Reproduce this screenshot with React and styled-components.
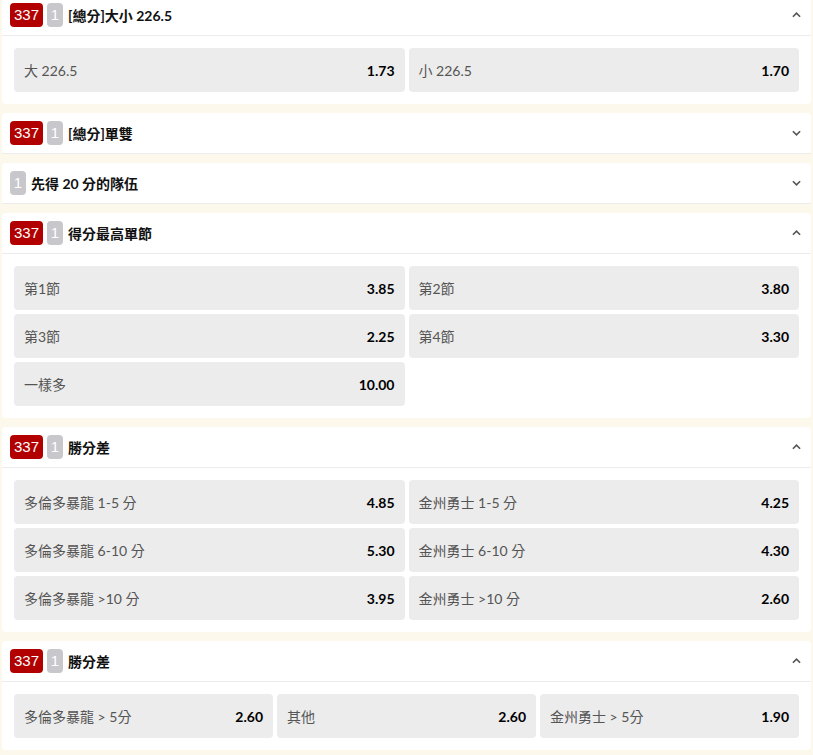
import React, { useState } from 'react';
import styled, { createGlobalStyle } from 'styled-components';

const GlobalStyle = createGlobalStyle`
  html, body {
    margin: 0;
    padding: 0;
    background: #fcf8ec;
  }
  body {
    font-family: Lato, "Noto Sans CJK TC", sans-serif;
    overflow: hidden;
  }
`;

const markets = [
  {
    id: 'ou',
    code: '337',
    title: '[總分]大小 226.5',
    open: true,
    cols: 2,
    options: [
      { label: '大 226.5', odds: '1.73' },
      { label: '小 226.5', odds: '1.70' },
    ],
  },
  { id: 'oe', code: '337', title: '[總分]單雙', open: false },
  { id: 'first20', title: '先得 20 分的隊伍', open: false },
  {
    id: 'quarter',
    code: '337',
    title: '得分最高單節',
    open: true,
    cols: 2,
    options: [
      { label: '第1節', odds: '3.85' },
      { label: '第2節', odds: '3.80' },
      { label: '第3節', odds: '2.25' },
      { label: '第4節', odds: '3.30' },
      { label: '一樣多', odds: '10.00' },
    ],
  },
  {
    id: 'margin',
    code: '337',
    title: '勝分差',
    open: true,
    cols: 2,
    options: [
      { label: '多倫多暴龍 1-5 分', odds: '4.85' },
      { label: '金州勇士 1-5 分', odds: '4.25' },
      { label: '多倫多暴龍 6-10 分', odds: '5.30' },
      { label: '金州勇士 6-10 分', odds: '4.30' },
      { label: '多倫多暴龍 >10 分', odds: '3.95' },
      { label: '金州勇士 >10 分', odds: '2.60' },
    ],
  },
  {
    id: 'margin5',
    code: '337',
    title: '勝分差',
    open: true,
    cols: 3,
    options: [
      { label: '多倫多暴龍 > 5分', odds: '2.60' },
      { label: '其他', odds: '2.60' },
      { label: '金州勇士 > 5分', odds: '1.90' },
    ],
  },
];

const Chevron = ({ up }) => (
  <ChevronIcon viewBox="0 0 10 6" $up={up}>
    <path d="M1 1 L5 5 L9 1" fill="none" stroke="#555" strokeWidth="1.8" />
  </ChevronIcon>
);

const Market = ({ market }) => {
  const [open, setOpen] = useState(market.open);
  return (
    <Panel>
      <Header onClick={() => setOpen(!open)}>
        {market.code && <CodeBadge>{market.code}</CodeBadge>}
        <CountBadge>1</CountBadge>
        <Title>{market.title}</Title>
        <Chevron up={open} />
      </Header>
      {open && market.options && (
        <Body $cols={market.cols}>
          {market.options.map((o) => (
            <OddsButton key={o.label}>
              <Label>{o.label}</Label>
              <Odds>{o.odds}</Odds>
            </OddsButton>
          ))}
        </Body>
      )}
    </Panel>
  );
};

const App = () => (
  <>
    <GlobalStyle />
    <Page>
      {markets.map((m) => (
        <Market key={m.id} market={m} />
      ))}
    </Page>
  </>
);

const Page = styled.div`
  padding: 0 2px;
  margin-top: -5px;
  display: flex;
  flex-direction: column;
  gap: 9px;
`;

const Panel = styled.section`
  background: #fff;
  border-radius: 4px;
`;

const Header = styled.div`
  height: 40px;
  display: flex;
  align-items: center;
  padding: 0 10px 0 8px;
  border-bottom: 1px solid #ececec;
  cursor: pointer;
`;

const CodeBadge = styled.span`
  background: #b20000;
  color: #fff;
  font-family: "Liberation Sans", "Noto Sans", sans-serif;
  font-size: 15px;
  line-height: 24px;
  height: 24px;
  padding: 0 4px;
  border-radius: 4px;
  margin-right: 4px;
`;

const CountBadge = styled.span`
  background: #c7c7cc;
  color: #fff;
  font-family: "Liberation Sans", "Noto Sans", sans-serif;
  font-size: 15px;
  line-height: 24px;
  height: 24px;
  width: 16px;
  text-align: center;
  border-radius: 4px;
  margin-right: 5px;
`;

const Title = styled.span`
  flex: 1;
  color: #111;
  font-size: 14px;
  font-weight: 700;
`;

const ChevronIcon = styled.svg`
  width: 9px;
  height: 6px;
  transform: ${(p) => (p.$up ? 'rotate(180deg)' : 'none')};
`;

const Body = styled.div`
  display: grid;
  grid-template-columns: repeat(${(p) => p.$cols}, 1fr);
  gap: 4px;
  padding: 12px;
`;

const OddsButton = styled.div`
  height: 44px;
  background: #ececec;
  border-radius: 4px;
  display: flex;
  align-items: center;
  justify-content: space-between;
  padding: 0 10px;
`;

const Label = styled.span`
  color: #555;
  font-size: 14px;
  white-space: nowrap;
`;

const Odds = styled.span`
  color: #000;
  font-size: 14px;
  font-weight: 700;
`;

export default App;
